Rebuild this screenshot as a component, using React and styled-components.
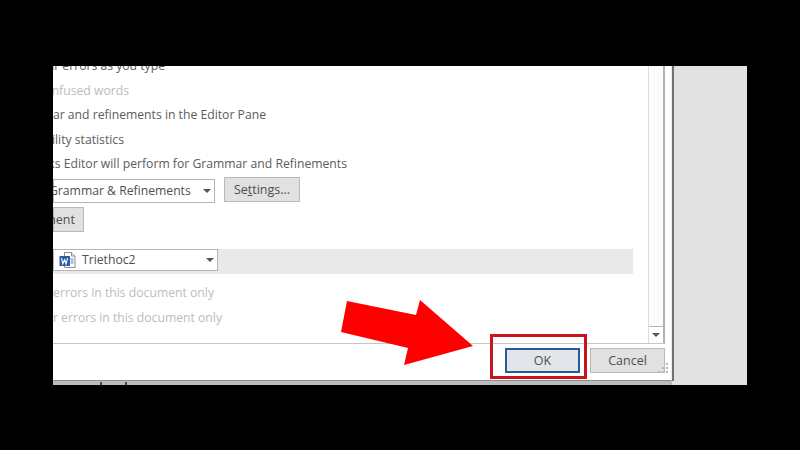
import React from "react";
import styled, { createGlobalStyle } from "styled-components";

const Global = createGlobalStyle`
  html, body {
    margin: 0;
    background: #000;
  }
  body {
    font-family: "Open Sans", "Liberation Sans", sans-serif;
  }
`;

const Stage = styled.div`
  position: relative;
  width: 800px;
  height: 450px;
  box-sizing: border-box;
  padding: 66px 53px 65px;
  overflow: hidden;
  background: #000;
`;

const Screen = styled.div`
  display: flex;
  height: 319px;
  overflow: hidden;
  background: #e2e2e2;
`;

const Window = styled.div`
  display: flex;
  flex-direction: column;
  flex: none;
  width: 619px;
`;

const Dialog = styled.div`
  display: flex;
  flex-direction: column;
  flex: none;
  height: 315px;
  box-sizing: border-box;
  background: #fff;
  border-right: 1px solid #e6eef5;
  border-bottom: 1px solid #8b8f94;
  box-shadow: 2px 0 0 #6d737b;
  overflow: hidden;
`;

const Peek = styled.div`
  display: flex;
  gap: 23px;
  flex: 1;
  padding-left: 47px;
  background: #b9bbbd;
`;

const Tick = styled.span`
  width: 2px;
  height: 3px;
  margin-top: 1px;
  background: #444;
`;

const Body = styled.div`
  display: flex;
  flex: none;
  height: 277px;
  border-bottom: 1px solid #c6c6c6;
  margin-right: 6px;
`;

const Options = styled.div`
  flex: 1;
  min-width: 0;
  margin-top: -12px;
  overflow: hidden;
`;

const Line = styled.div`
  display: flex;
  justify-content: flex-end;
  width: ${(p) => p.$end - 53}px;
  height: 24.6px;
  line-height: 24.6px;
  font-size: 12.2px;
  white-space: nowrap;
  color: ${(p) => (p.$off ? "#bdbdbd" : "#5c5c5c")};
`;

const Controls = styled.div`
  display: flex;
  align-items: flex-start;
  gap: 9px;
  height: 30px;
`;

const Select = styled.div`
  display: flex;
  align-items: center;
  flex: none;
  justify-content: space-between;
  box-sizing: border-box;
  height: ${(p) => p.$h}px;
  width: ${(p) => p.$w}px;
  margin-top: ${(p) => p.$top || 0}px;
  padding: 0 ${(p) => p.$pad}px 0 5px;
  background: #fff;
  border: 1px solid #b4b4b4;
  font-size: 12.2px;
  color: #4e4e4e;
  white-space: nowrap;
`;

const SelectLabel = styled.span`
  display: flex;
  align-items: center;
  gap: 5px;
  margin-left: ${(p) => p.$shift || 0}px;
`;

const Caret = styled.span`
  width: 0;
  height: 0;
  border-left: 4.5px solid transparent;
  border-right: 4.5px solid transparent;
  border-top: 4.5px solid #555;
`;

const Button = styled.div`
  display: flex;
  align-items: center;
  justify-content: ${(p) => (p.$end ? "flex-end" : "center")};
  flex: none;
  box-sizing: border-box;
  width: ${(p) => p.$w}px;
  height: 25px;
  padding-right: ${(p) => (p.$end ? "8px" : "0")};
  background: ${(p) => (p.$primary ? "#e2e6ea" : "#e1e1e1")};
  border: ${(p) => (p.$primary ? "2px solid #2a5a94" : "1px solid #b9b9b9")};
  font-size: 12.5px;
  color: #4e4e4e;
  white-space: nowrap;
`;

const Key = styled.u`
  text-underline-offset: 1px;
`;

const Band = styled.div`
  display: flex;
  height: 25px;
  margin: 17px 15px 7px 0;
  background: #e9e9e9;
`;

const Scrollbar = styled.div`
  display: flex;
  flex-direction: column;
  justify-content: flex-end;
  flex: none;
  width: 17px;
  box-sizing: border-box;
  background: #fbfcfc;
  border-left: 1px solid #dcdcdc;
  border-right: 2px solid #b2b2b2;
`;

const ScrollArrow = styled.div`
  display: flex;
  align-items: center;
  justify-content: center;
  height: 16px;
  background: #fff;
  border-top: 1px solid #b5b5b5;
`;

const Footer = styled.div`
  position: relative;
  display: flex;
  justify-content: flex-end;
  gap: 10px;
  padding: 4px 6px 0 0;
`;

const Grip = styled.svg`
  position: absolute;
  right: 1px;
  bottom: 0;
`;

const Arrow = styled.svg`
  position: absolute;
  left: 0;
  top: 0;
  pointer-events: none;
`;

const Highlight = styled.div`
  position: absolute;
  left: 490px;
  top: 334px;
  width: 97px;
  height: 45px;
  box-sizing: border-box;
  border: 3px solid #c8141e;
`;

const WordIcon = () => (
  <svg width="18" height="18" viewBox="0 0 18 18">
    <path d="M5.500 1.500h7l3.500 3.500v11.500h-10.500z" fill="#fff" stroke="#8d8d8d" />
    <path d="M12.500 1.500v3.500h3.500" fill="#e8e8e8" stroke="#8d8d8d" />
    <path d="M11.500 8h3M11.500 10h3M11.500 12h3" stroke="#5b86bd" />
    <rect x="0.500" y="5" width="10.500" height="10" fill="#2b5fa8" />
    <path d="M2.500 7.200l1.300 5.600 1.800-4 1.500 4 1.400-5.600" fill="none" stroke="#fff" strokeWidth="1.100" />
  </svg>
);

export default function App() {
  return (
    <Stage>
      <Global />
      <Screen>
        <Window>
          <Dialog>
            <Body>
              <Options>
                <Line $end={165}>ar errors as you type</Line>
                <Line $off $end={129}>nfused words</Line>
                <Line $end={266}>ar and refinements in the Editor Pane</Line>
                <Line $end={124}>ility statistics</Line>
                <Line $end={347}>ks Editor will perform for Grammar and Refinements</Line>
                <Controls>
                  <Select $w={162} $h={24} $top={2} $pad={3}>
                    <SelectLabel $shift={-10}>Grammar &amp; Refinements</SelectLabel>
                    <Caret />
                  </Select>
                  <Button $w={76}>
                    <span>Se<Key>t</Key>tings...</span>
                  </Button>
                </Controls>
                <Button $w={31} $end>ment</Button>
                <Band>
                  <Select $w={165} $h={22} $pad={3}>
                    <SelectLabel>
                      <WordIcon />
                      Triethoc2
                    </SelectLabel>
                    <Caret />
                  </Select>
                </Band>
                <Line $off $end={214}>errors in this document only</Line>
                <Line $off $end={222}>ar errors in this document only</Line>
              </Options>
              <Scrollbar>
                <ScrollArrow>
                  <Caret />
                </ScrollArrow>
              </Scrollbar>
            </Body>
            <Footer>
              <Button $w={75} $primary>OK</Button>
              <Button $w={75}>Cancel</Button>
              <Grip width="12" height="12" viewBox="0 0 12 12">
                <path d="M8 2h2v2H8zM8 6h2v2H8zM4 6h2v2H4zM8 10h2v2H8zM4 10h2v2H4zM0 10h2v2H0z" fill="#b4b8bc" />
              </Grip>
            </Footer>
          </Dialog>
          <Peek>
            <Tick />
            <Tick />
          </Peek>
        </Window>
      </Screen>
      <Highlight />
      <Arrow width="800" height="450" viewBox="0 0 800 450">
        <polygon points="347,301 416,315 420,300 473,346 404,365 408,348 341,332" fill="#fe0000" />
      </Arrow>
    </Stage>
  );
}
